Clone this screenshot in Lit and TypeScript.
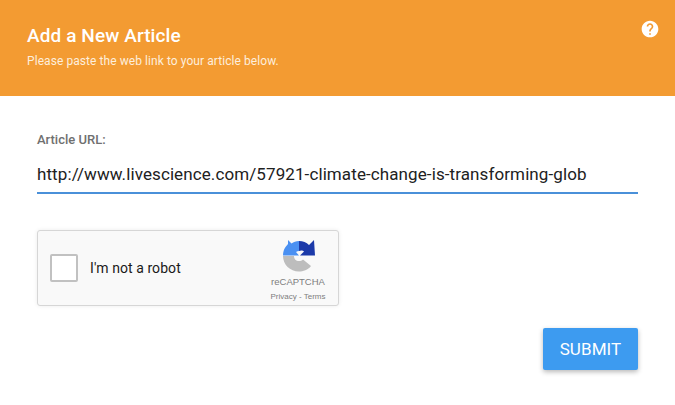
import { LitElement, html, css } from "lit";
import { customElement } from "lit/decorators.js";

@customElement("app-root")
export class AppRoot extends LitElement {
  static styles = css`
    :host { display: block; width: 675px; height: 405px; background: #fff; font-family: Roboto, "Liberation Sans", sans-serif; overflow: hidden; position: relative; }
    .header { height: 96px; box-sizing: border-box; background: #f39b32; padding: 23px 27px 0; color: #fff; display: flex; justify-content: space-between; }
    h1 { margin: 0; font-size: 19px; line-height: 25px; font-weight: 500; letter-spacing: 0.1px; }
    .sub { margin: 6px 0 0; font-size: 12px; line-height: 14px; letter-spacing: 0.07px; color: #fdeedd; }
    .help { width: 20px; height: 20px; margin: -4px -12px 0 0; display: block; }
    .main { padding: 36px 37px 0; }
    .label { font-size: 13px; line-height: 16px; font-weight: 500; color: #707070; }
    .field { margin-top: 14px; width: 601px; height: 32px; box-sizing: border-box; border-bottom: 2px solid #4a90d9; }
    .value { white-space: nowrap; font-size: 17px; line-height: 24px; color: #212121; letter-spacing: 0.1px; }
    .captcha { margin-top: 36px; width: 302px; height: 76px; box-sizing: border-box; background: #f9f9f9; border: 1px solid #d6d6d6; border-radius: 3px; box-shadow: 0 0 4px rgba(0,0,0,.08); display: flex; align-items: center; padding-left: 12px; position: relative; }
    .box { width: 28px; height: 28px; box-sizing: border-box; background: #fff; border: 2px solid #c1c1c1; border-radius: 2px; }
    .robot { margin-left: 12px; font-size: 14px; color: #1a1a1a; letter-spacing: 0.07px; }
    .brand { position: absolute; left: 228px; top: 9px; width: 64px; display: flex; flex-direction: column; align-items: center; }
    .logo { width: 32px; height: 32px; display: block; margin-left: 2px; }
    .rc { margin-top: 4px; font-size: 9.5px; line-height: 12px; font-family: "Liberation Sans", sans-serif; color: #7d7d7d; }
    .terms { margin-top: 4px; font-size: 8px; line-height: 10px; font-family: "Liberation Sans", sans-serif; color: #7d7d7d; }
    .actions { display: flex; justify-content: flex-end; width: 601px; margin-top: 22px; }
    button { width: 95px; height: 42px; border: 0; border-radius: 2px; background: #3d9bf0; color: #fff; font: 400 17px Roboto, sans-serif; letter-spacing: 0.1px; box-shadow: 0 2px 5px rgba(0,0,0,.28); padding: 0; }
  `;

  render() {
    return html`
      <div class="header">
        <div>
          <h1>Add a New Article</h1>
          <p class="sub">Please paste the web link to your article below.</p>
        </div>
        <svg class="help" viewBox="0 0 24 24"><path fill="#fff" d="M12 2C6.48 2 2 6.48 2 12s4.48 10 10 10 10-4.48 10-10S17.52 2 12 2zm1 17h-2v-2h2v2zm2.07-7.75l-.9.92C13.45 12.9 13 13.5 13 15h-2v-.5c0-1.1.45-2.1 1.17-2.83l1.24-1.26c.37-.36.59-.86.59-1.41 0-1.1-.9-2-2-2s-2 .9-2 2H8c0-2.21 1.79-4 4-4s4 1.79 4 4c0 .88-.36 1.68-.93 2.25z"/></svg>
      </div>
      <div class="main">
        <div class="label">Article URL:</div>
        <div class="field"><div class="value">http://www.livescience.com/57921-climate-change-is-transforming-glob</div></div>
        <div class="captcha">
          <div class="box"></div>
          <div class="robot">I'm not a robot</div>
          <div class="brand">
            <svg class="logo" viewBox="0 0 32 32">
              <path fill="#4a90f2" d="M5 0 L8.5 3.5 C10.5 2 13 1 16 1 L16 11 C15 11 14 11.5 13 12 L16 15.5 L0 15.5 C0 12 1 9 2.5 7 L5 4 Z"/>
              <path fill="#1c3aa9" d="M16 1 C20 1 23.5 2.5 26 5 L31 0 L32 15.5 L17 15.5 L21 11.5 C20 10.5 18 10 16 11 Z"/>
              <path fill="#bdbdbd" d="M0 16 H11 C11 19 13 21 16 21 C17.5 21 19 20.5 20 19.5 L28 26 C25 30 20 31.5 16 31.5 C7 31.5 0 24.5 0 16 Z"/>
            </svg>
            <div class="rc">reCAPTCHA</div>
            <div class="terms">Privacy - Terms</div>
          </div>
        </div>
        <div class="actions"><button>SUBMIT</button></div>
      </div>
    `;
  }
}
